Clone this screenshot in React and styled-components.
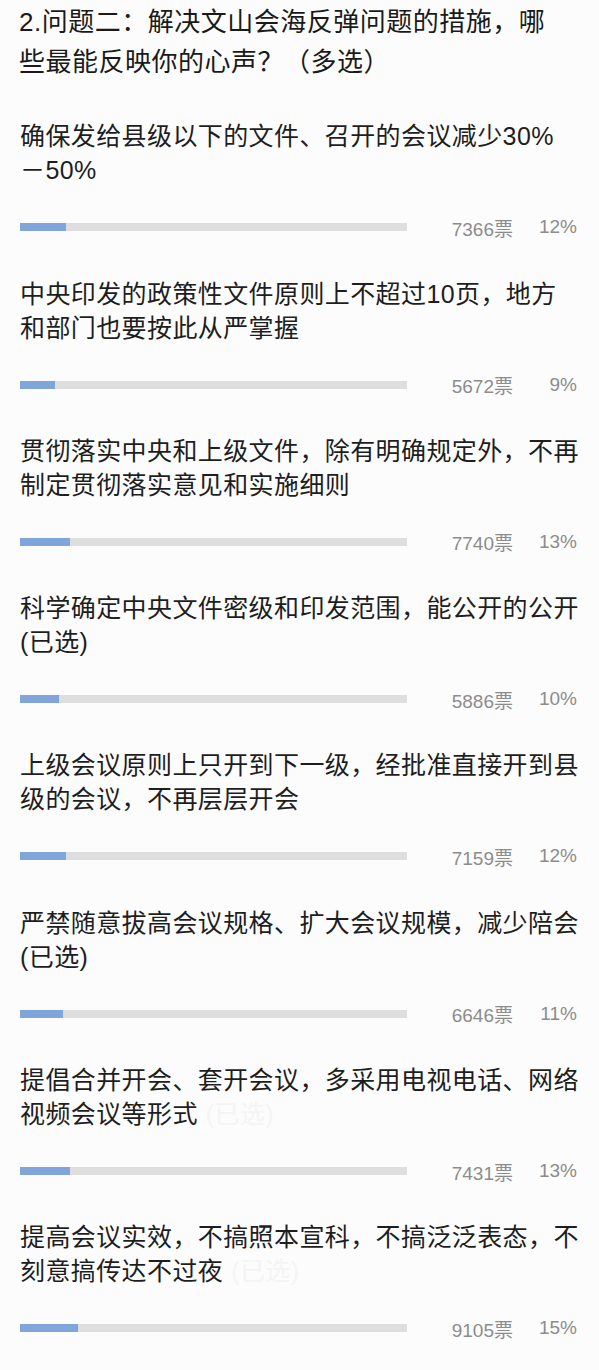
import React from "react";
import styled, { createGlobalStyle } from "styled-components";

const GlobalStyle = createGlobalStyle`
  html, body {
    margin: 0;
    padding: 0;
    background: #fcfcfc;
  }
  body {
    font-family: "Liberation Sans", "Noto Sans CJK SC", sans-serif;
    color: #1e1e1e;
  }
`;

const Page = styled.div`
  width: 599px;
  min-height: 1370px;
  box-sizing: border-box;
  padding: 2px 22px 0 19px;
  background: #fcfcfc;
`;

const Title = styled.h2`
  margin: 0;
  font-size: 26px;
  font-weight: normal;
  line-height: 40px;
  letter-spacing: 0.5px;
  color: #1a1a1a;
`;

const Line = styled.span`
  display: block;
  white-space: nowrap;
`;

const Option = styled.div`
  padding-top: 37.3px;
  padding-left: 1px;
`;

const OptionText = styled.div`
  font-size: 25px;
  line-height: 34px;
  letter-spacing: 0.4px;
  color: #1e1e1e;
`;

const Faded = styled.span`
  color: #f4f4f4;
  margin-left: 8px;
`;

const StatRow = styled.div`
  display: flex;
  align-items: center;
  height: 24px;
  margin-top: 28px;
`;

const Track = styled.div`
  flex: none;
  width: 387px;
  height: 8px;
  background: #dedede;
`;

const Fill = styled.div`
  height: 100%;
  background: #7fa5da;
`;

const Count = styled.span`
  width: 106px;
  text-align: right;
  font-size: 19px;
  color: #8c8c8c;
`;

const Percent = styled.span`
  width: 64px;
  text-align: right;
  font-size: 19px;
  color: #8c8c8c;
`;

const options = [
  { lines: ["确保发给县级以下的文件、召开的会议减少30%", "－50%"], votes: 7366, pct: 12 },
  { lines: ["中央印发的政策性文件原则上不超过10页，地方", "和部门也要按此从严掌握"], votes: 5672, pct: 9 },
  { lines: ["贯彻落实中央和上级文件，除有明确规定外，不再", "制定贯彻落实意见和实施细则"], votes: 7740, pct: 13 },
  { lines: ["科学确定中央文件密级和印发范围，能公开的公开", "(已选)"], votes: 5886, pct: 10 },
  { lines: ["上级会议原则上只开到下一级，经批准直接开到县", "级的会议，不再层层开会"], votes: 7159, pct: 12 },
  { lines: ["严禁随意拔高会议规格、扩大会议规模，减少陪会", "(已选)"], votes: 6646, pct: 11 },
  { lines: ["提倡合并开会、套开会议，多采用电视电话、网络", "视频会议等形式"], votes: 7431, pct: 13, hidden: true },
  { lines: ["提高会议实效，不搞照本宣科，不搞泛泛表态，不", "刻意搞传达不过夜"], votes: 9105, pct: 15, hidden: true },
];

export default function App() {
  return (
    <>
      <GlobalStyle />
      <Page>
        <Title>
          <Line>2.问题二：解决文山会海反弹问题的措施，哪</Line>
          <Line>些最能反映你的心声？（多选）</Line>
        </Title>
        {options.map((o, i) => (
          <Option key={i}>
            <OptionText>
              <Line>{o.lines[0]}</Line>
              <Line>
                {o.lines[1]}
                {o.hidden && <Faded>(已选)</Faded>}
              </Line>
            </OptionText>
            <StatRow>
              <Track>
                <Fill style={{ width: `${o.pct}%` }} />
              </Track>
              <Count>{o.votes}票</Count>
              <Percent>{o.pct}%</Percent>
            </StatRow>
          </Option>
        ))}
      </Page>
    </>
  );
}
